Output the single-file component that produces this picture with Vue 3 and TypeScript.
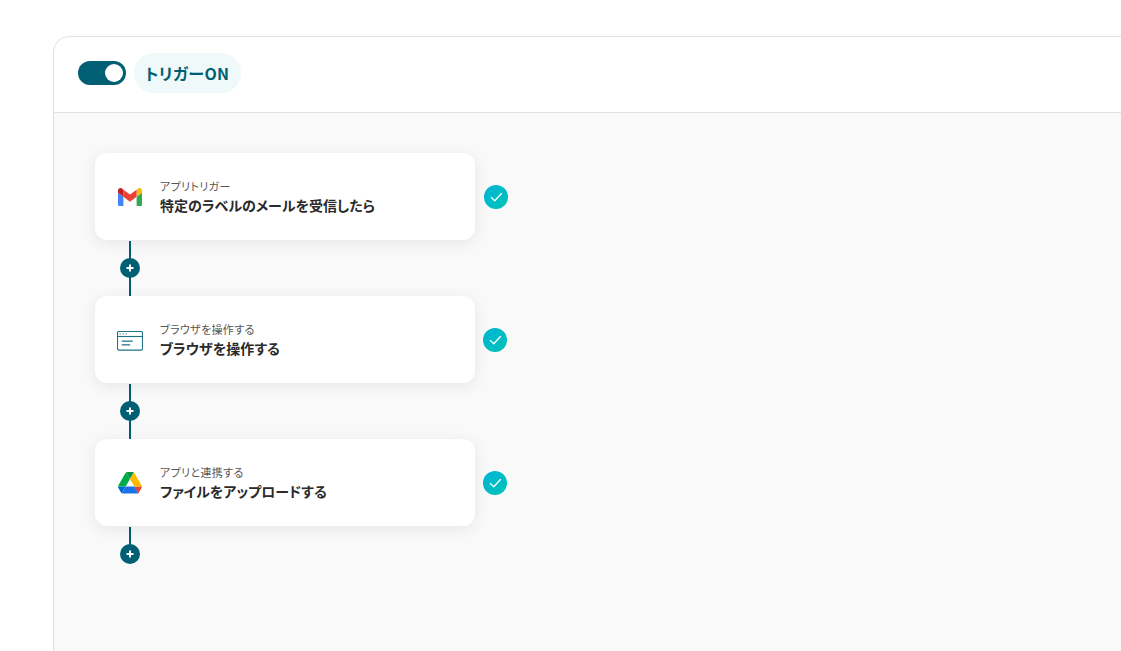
<script setup lang="ts">
interface Step { id: string; label: string; title: string; gap: number }
const steps: Step[] = [
  { id: 'gmail', label: 'アプリトリガー', title: '特定のラベルのメールを受信したら', gap: 9 },
  { id: 'browser', label: 'ブラウザを操作する', title: 'ブラウザを操作する', gap: 8 },
  { id: 'drive', label: 'アプリと連携する', title: 'ファイルをアップロードする', gap: 8 },
]
</script>

<template>
  <div class="page">
    <section class="frame">
      <header class="head">
        <span class="toggle"><span class="knob"></span></span>
        <span class="pill">トリガーON</span>
      </header>
      <main class="canvas">
        <div v-for="s in steps" :key="s.id" class="step">
          <div class="row">
            <div class="card">
              <svg v-if="s.id === 'gmail'" class="icon icon-gmail" viewBox="0 0 24 18" width="24" height="18">
                <path d="M1.6 18h3.8V8.8L0 4.7v11.7C0 17.3.7 18 1.6 18z" fill="#4285f4"/>
                <path d="M18.6 18h3.8c.9 0 1.6-.7 1.6-1.6V4.7l-5.4 4.1z" fill="#34a853"/>
                <path d="M18.6 1.700v7.100L24 4.700V2.400c0-2-2.300-3.100-3.800-1.900z" fill="#fbbc04"/>
                <path d="M5.400 8.800V1.700L12 6.600l6.600-4.900v7.100L12 13.700z" fill="#ea4335"/>
                <path d="M0 2.400v2.300l5.400 4.100V1.700L3.800.5C2.300-.6 0 .4 0 2.400z" fill="#c5221f"/>
              </svg>
              <svg v-else-if="s.id === 'browser'" class="icon icon-browser" viewBox="0 0 26 20" width="26" height="20" fill="none" stroke="#1f7285" stroke-width="1.100">
                <rect x=".5" y=".5" width="25" height="18.600" rx="1.500"/>
                <path d="M.5 5.500h25"/>
                <path d="M4.700 10.200h11M4.700 13.800h8.500" stroke-width="1.200"/>
                <path d="M2.500 3h1.200M5.500 3h1.200M8.500 3h1.200" stroke-width="1"/>
              </svg>
              <svg v-else class="icon icon-drive" viewBox="0 0 24 21.500" width="24" height="21.500">
                <path d="M1.800 18.400l1.100 1.800c.2.400.5.700.9 1l3.800-6.600H0c0 .4.100.8.300 1.200z" fill="#0066da"/>
                <path d="M12 7L8.200.4c-.4.200-.7.500-.9.900L.3 13.400c-.2.400-.3.800-.3 1.200h7.600z" fill="#00ac47"/>
                <path d="M20.200 21.200c.4-.2.700-.6.900-1l.4-.8 2.100-3.600c.2-.4.300-.800.300-1.200h-7.600l1.600 3.200z" fill="#ea4335"/>
                <path d="M12 7L15.800.4c-.4-.2-.8-.4-1.200-.4H9.400c-.4 0-.9.100-1.200.4z" fill="#0a9345"/>
                <path d="M16.400 14.600H7.600l-3.800 6.600c.4.200.8.300 1.200.3h14c.4 0 .9-.1 1.200-.3z" fill="#1a73e8"/>
                <path d="M20.100 7.400l-3.500-6.100c-.2-.4-.5-.7-.9-.9L12 7l4.400 7.600H24c0-.4-.1-.8-.3-1.200z" fill="#ffba00"/>
              </svg>
              <div class="texts">
                <div class="label">{{ s.label }}</div>
                <div class="title">{{ s.title }}</div>
              </div>
            </div>
            <span class="check" :style="{ marginLeft: s.gap + 'px' }">
              <svg viewBox="0 0 24 24" width="24" height="24" fill="none" stroke="#fff" stroke-width="1.300" stroke-linecap="round" stroke-linejoin="round">
                <path d="M7.300 12.400l3.400 3.300 6.800-7.200"/>
              </svg>
            </span>
          </div>
          <div class="connector">
            <span class="plus">
              <svg viewBox="0 0 20 20" width="20" height="20" stroke="#fff" stroke-width="2">
                <path d="M10 6.500v7M6.500 10h7"/>
              </svg>
            </span>
          </div>
        </div>
      </main>
    </section>
  </div>
</template>

<style>
html, body { margin: 0; background: #fff; overflow: hidden; }
</style>

<style scoped>
.page {
  width: 1121px;
  height: 651px;
  overflow: hidden;
  padding: 36px 0 0 53px;
  box-sizing: border-box;
  font-family: "Noto Sans CJK JP", "Noto Sans", sans-serif;
  font-feature-settings: "palt";
}
.frame {
  width: 1100px;
  height: 640px;
  box-sizing: border-box;
  border: 1px solid #e2e2e2;
  border-radius: 16px 0 0 0;
  background: #fff;
  display: flex;
  flex-direction: column;
}
.head {
  height: 76px;
  flex: none;
  box-sizing: border-box;
  border-bottom: 1px solid #e2e2e2;
  padding: 16px 0 0 24px;
  display: flex;
  align-items: flex-start;
}
.toggle {
  width: 48px;
  height: 24px;
  margin-top: 8px;
  border-radius: 12px;
  background: #005f73;
  display: flex;
  align-items: center;
  justify-content: flex-end;
  padding-right: 3px;
  box-sizing: border-box;
}
.knob { width: 18px; height: 18px; border-radius: 50%; background: #fff; }
.pill {
  margin-left: 8px;
  height: 40px;
  width: 107px;
  box-sizing: border-box;
  padding-left: 11px;
  border-radius: 20px;
  background: #f0f9fa;
  color: #005f73;
  font-size: 16px;
  font-weight: 700;
  letter-spacing: 0.4px;
  line-height: 41px;
  white-space: nowrap;
}
.canvas {
  flex: 1;
  background: #f9f9f9;
  padding: 40px 0 0 41px;
}
.step { width: 440px; }
.row { display: flex; align-items: center; }
.card {
  width: 380px;
  height: 87px;
  box-sizing: border-box;
  border-radius: 12px;
  background: #fff;
  box-shadow: 0 3px 15px rgba(0, 0, 0, 0.08);
  display: flex;
  align-items: center;
  position: relative;
}
.icon { position: absolute; }
.icon-gmail { left: 23px; top: 35px; }
.icon-browser { left: 22px; top: 35px; }
.icon-drive { left: 23px; top: 33px; }
.texts { margin-left: 65px; }
.label { font-size: 11px; line-height: 15px; margin-top: 1px; letter-spacing: 0.35px; color: #555; }
.title { font-size: 14px; line-height: 21px; margin-top: 1px; font-weight: 700; color: #2a2a2a; }
.check {
  width: 24px;
  height: 24px;
  border-radius: 50%;
  background: linear-gradient(135deg, #00b4d8, #00c4b4);
  display: block;
}
.check svg, .plus svg { display: block; }
.connector {
  width: 2px;
  height: 55px;
  margin: 1px 0 0 34px;
  background: #005f73;
  display: flex;
  align-items: flex-start;
  justify-content: center;
}
.step:last-child .connector { height: 27px; }
.plus {
  width: 20px;
  height: 20px;
  flex: none;
  margin-top: 17px;
  border-radius: 50%;
  background: #005f73;
}
</style>
